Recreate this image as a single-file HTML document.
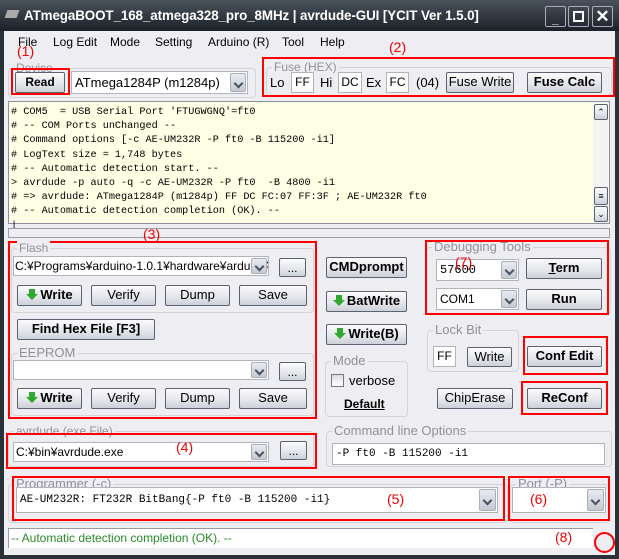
<!DOCTYPE html><html><head><meta charset="utf-8"><style>
*{box-sizing:border-box;margin:0;padding:0}
body{width:619px;height:559px;overflow:hidden;background:#2b3138;font-family:"Liberation Sans","Noto Sans CJK JP",sans-serif;font-size:12px;color:#000;position:relative}
.a{position:absolute}
.win{left:4px;top:31px;width:611px;height:524px;background:#eeeef2}
.btn{position:absolute;border:1px solid #5b6370;border-radius:2px;background:linear-gradient(#fbfbfd,#e3e5ea 60%,#ccd0d8);text-align:center;font-size:12px;line-height:18px;color:#000}
.b{font-weight:bold}
.grp{position:absolute;border:1px solid #d3d3d8;border-radius:4px}
.gl{position:absolute;top:-8px;left:5px;background:#eeeef2;color:#909098;padding:0 2px;font-size:12px;line-height:14px}
.red{position:absolute;border:2px solid #f00}
.rt{position:absolute;color:#e00;font-size:14px}
.cb{position:absolute;background:#fff;border:1px solid #b0b4bc;font-size:12px;line-height:18px;padding-left:3px;white-space:nowrap;overflow:hidden}
.dd{position:absolute;right:1px;top:1px;bottom:1px;width:16px;background:linear-gradient(#e8ebf0,#c5cad3);border:1px solid #a9aeb8;border-radius:2px;font-size:9px;color:#445;text-align:center}
.dd:after{content:"";position:absolute;left:4px;top:50%;margin-top:-3px;width:5px;height:5px;border-right:2px solid #4a5060;border-bottom:2px solid #4a5060;transform:rotate(45deg)}
.tb{position:absolute;background:#fff;border:1px solid #b0b4bc;text-align:center;line-height:19px}
.mono{font-family:"Liberation Mono",monospace}
.ar{display:inline-block;width:13px;height:12px;vertical-align:-2px;margin-right:1px;position:relative}
.ar:before{content:"";position:absolute;left:3px;top:0;width:6px;height:5px;background:#2ea82e}
.ar:after{content:"";position:absolute;left:0;top:5px;border-left:6px solid transparent;border-right:6px solid transparent;border-top:6px solid #2ea82e}
</style></head><body>
<div class="a" style="left:0;top:0;width:619px;height:31px;background:linear-gradient(#4a525c,#1c2128)"></div>
<div class="a" style="left:6px;top:10px;width:12px;height:8px;background:#aaa;transform:skew(-20deg)"></div>
<div class="a b" style="left:24px;top:8px;color:#fff;font-size:13.4px;letter-spacing:-0.1px">ATmegaBOOT_168_atmega328_pro_8MHz | avrdude-GUI [YCIT Ver 1.5.0]</div>
<div class="a" style="left:545px;top:6px;width:21px;height:21px;border:1px solid #aab;border-radius:2px;color:#fff;text-align:center;font-weight:bold;line-height:24px">_</div>
<div class="a" style="left:568px;top:6px;width:21px;height:21px;border:1px solid #aab;border-radius:2px"><div class="a" style="left:4px;top:4px;width:11px;height:11px;border:2px solid #fff"></div></div>
<div class="a" style="left:592px;top:6px;width:21px;height:21px;border:1px solid #aab;border-radius:2px;color:#fff;text-align:center;font-size:17px;line-height:19px;font-weight:bold">✕</div>
<div class="a win"></div>
<div class="a" style="top:35px;left:18px">File</div>
<div class="a" style="top:35px;left:53px">Log Edit</div>
<div class="a" style="top:35px;left:110px">Mode</div>
<div class="a" style="top:35px;left:155px">Setting</div>
<div class="a" style="top:35px;left:208px">Arduino (R)</div>
<div class="a" style="top:35px;left:282px">Tool</div>
<div class="a" style="top:35px;left:320px">Help</div>
<div class="rt" style="left:17px;top:43px">(1)</div>
<div class="rt" style="left:389px;top:39px">(2)</div>
<div class="grp" style="left:8px;top:68px;width:248px;height:30px"><div class="gl">Device</div></div>
<div class="red" style="left:11px;top:68px;width:59px;height:27px"></div>
<div class="btn b" style="left:15px;top:72px;width:50px;height:21px">Read</div>
<div class="cb" style="left:71px;top:71px;width:177px;height:23px;line-height:21px;font-size:13px">ATmega1284P (m1284p)<div class="dd"></div></div>
<div class="grp" style="left:266px;top:67px;width:346px;height:29px"><div class="gl">Fuse (HEX)</div></div>
<div class="red" style="left:262px;top:57px;width:353px;height:40px"></div>
<div class="a" style="left:270px;top:75px;font-size:13px">Lo</div>
<div class="tb" style="left:291px;top:72px;width:23px;height:21px">FF</div>
<div class="a" style="left:320px;top:75px;font-size:13px">Hi</div>
<div class="tb" style="left:338px;top:72px;width:24px;height:21px">DC</div>
<div class="a" style="left:366px;top:75px;font-size:13px">Ex</div>
<div class="tb" style="left:386px;top:72px;width:23px;height:21px">FC</div>
<div class="a" style="left:416px;top:75px;font-size:13px">(04)</div>
<div class="btn" style="left:446px;top:72px;width:68px;height:21px;font-size:13px">Fuse Write</div>
<div class="btn b" style="left:527px;top:72px;width:75px;height:21px;font-size:13px">Fuse Calc</div>
<div class="a mono" style="left:8px;top:101px;width:602px;height:123px;background:#ffffe6;border:1px solid #8a8f99;font-size:10.2px;line-height:14.2px;padding:4px 0 0 2px;white-space:pre"># COM5  = USB Serial Port 'FTUGWGNQ'=ft0
# -- COM Ports unChanged --
# Command options [-c AE-UM232R -P ft0 -B 115200 -i1]
# LogText size = 1,748 bytes
# -- Automatic detection start. --
&gt; avrdude -p auto -q -c AE-UM232R -P ft0  -B 4800 -i1
# =&gt; avrdude: ATmega1284P (m1284p) FF DC FC:07 FF:3F ; AE-UM232R ft0
# -- Automatic detection completion (OK). --
|</div>
<div class="a" style="left:593px;top:102px;width:16px;height:121px;background:#f4f4f4"></div>
<div class="btn" style="left:594px;top:104px;width:14px;height:16px;font-size:9px;line-height:14px">⌃</div>
<div class="btn" style="left:594px;top:187px;width:14px;height:18px;font-size:9px;line-height:16px">≡</div>
<div class="btn" style="left:594px;top:206px;width:14px;height:16px;font-size:9px;line-height:14px">⌄</div>
<div class="a" style="left:8px;top:228px;width:602px;height:10px;border:1px solid #9aa0aa;background:#eeeef2"></div>
<div class="rt" style="left:143px;top:226px">(3)</div>
<div class="red" style="left:8px;top:241px;width:309px;height:178px"></div>
<div class="grp" style="left:11px;top:248px;width:303px;height:65px"><div class="gl">Flash</div></div>
<div class="cb" style="left:13px;top:256px;width:256px;height:20px;padding-left:1px">C:¥Programs¥arduino-1.0.1¥hardware¥arduino¥<div class="dd"></div></div>
<div class="btn" style="left:279px;top:258px;width:27px;height:19px">...</div>
<div class="btn b" style="left:17px;top:285px;width:65px;height:21px;font-size:13px"><span class="ar"></span>Write</div>
<div class="btn" style="left:91px;top:285px;width:65px;height:21px;font-size:13px">Verify</div>
<div class="btn" style="left:165px;top:285px;width:65px;height:21px;font-size:13px">Dump</div>
<div class="btn" style="left:239px;top:285px;width:68px;height:21px;font-size:13px">Save</div>
<div class="btn b" style="left:17px;top:319px;width:138px;height:21px;font-size:13px">Find Hex File [F3]</div>
<div class="grp" style="left:11px;top:353px;width:303px;height:63px"><div class="gl" style="font-size:13px">EEPROM</div></div>
<div class="cb" style="left:13px;top:360px;width:256px;height:20px"><div class="dd"></div></div>
<div class="btn" style="left:279px;top:362px;width:27px;height:19px">...</div>
<div class="btn b" style="left:17px;top:388px;width:65px;height:21px;font-size:13px"><span class="ar"></span>Write</div>
<div class="btn" style="left:91px;top:388px;width:65px;height:21px;font-size:13px">Verify</div>
<div class="btn" style="left:165px;top:388px;width:65px;height:21px;font-size:13px">Dump</div>
<div class="btn" style="left:239px;top:388px;width:68px;height:21px;font-size:13px">Save</div>
<div class="btn b" style="left:326px;top:257px;width:81px;height:21px;font-size:13px">CMDprompt</div>
<div class="btn b" style="left:326px;top:291px;width:81px;height:21px;font-size:13px"><span class="ar"></span>BatWrite</div>
<div class="btn b" style="left:326px;top:324px;width:81px;height:21px;font-size:13px"><span class="ar"></span>Write(B)</div>
<div class="grp" style="left:325px;top:361px;width:83px;height:56px"><div class="gl" style="font-size:13px">Mode</div></div>
<div class="a" style="left:331px;top:374px;width:13px;height:13px;border:1px solid #778;background:linear-gradient(#ddd,#fff)"></div>
<div class="a" style="left:349px;top:373px;font-size:13px">verbose</div>
<div class="a b" style="left:344px;top:397px;text-decoration:underline">Default</div>
<div class="grp" style="left:426px;top:247px;width:185px;height:67px"><div class="gl" style="font-size:13px">Debugging Tools</div></div>
<div class="red" style="left:425px;top:240px;width:184px;height:75px"></div>
<div class="cb mono" style="left:436px;top:259px;width:83px;height:22px;line-height:20px">57600<div class="dd"></div></div>
<div class="rt" style="left:455px;top:254px">(7)</div>
<div class="cb" style="left:436px;top:288px;width:83px;height:22px;line-height:20px">COM1<div class="dd"></div></div>
<div class="btn b" style="left:526px;top:258px;width:76px;height:21px;font-size:13px"><u>T</u>erm</div>
<div class="btn b" style="left:526px;top:289px;width:76px;height:21px;font-size:13px">Run</div>
<div class="grp" style="left:427px;top:330px;width:92px;height:42px"><div class="gl" style="font-size:13px">Lock Bit</div></div>
<div class="tb" style="left:433px;top:346px;width:23px;height:21px">FF</div>
<div class="btn" style="left:467px;top:347px;width:45px;height:20px;font-size:13px">Write</div>
<div class="red" style="left:523px;top:336px;width:85px;height:39px"></div>
<div class="btn b" style="left:527px;top:346px;width:75px;height:21px;font-size:13px">Conf Edit</div>
<div class="btn" style="left:437px;top:388px;width:76px;height:21px;font-size:13px">ChipErase</div>
<div class="red" style="left:521px;top:381px;width:87px;height:34px"></div>
<div class="btn b" style="left:527px;top:388px;width:75px;height:21px;font-size:13px">ReConf</div>
<div class="grp" style="left:8px;top:431px;width:306px;height:36px"><div class="gl">avrdude (exe File)</div></div>
<div class="red" style="left:6px;top:433px;width:311px;height:36px"></div>
<div class="cb" style="left:13px;top:442px;width:256px;height:20px;padding-left:2px">C:¥bin¥avrdude.exe<div class="dd"></div></div>
<div class="rt" style="left:176px;top:439px">(4)</div>
<div class="btn" style="left:280px;top:441px;width:27px;height:19px">...</div>
<div class="grp" style="left:326px;top:431px;width:286px;height:36px"><div class="gl" style="font-size:13px">Command line Options</div></div>
<div class="tb mono" style="left:332px;top:443px;width:273px;height:22px;text-align:left;padding-left:3px;font-size:11px;line-height:20px">-P ft0 -B 115200 -i1</div>
<div class="grp" style="left:8px;top:484px;width:500px;height:39px"><div class="gl" style="font-size:13px">Programmer (-c)</div></div>
<div class="red" style="left:12px;top:476px;width:493px;height:45px"></div>
<div class="cb mono" style="left:16px;top:487px;width:482px;height:26px;line-height:24px;font-size:11px">AE-UM232R: FT232R BitBang{-P ft0 -B 115200 -i1}<div class="dd" style="width:17px"></div></div>
<div class="rt" style="left:387px;top:491px">(5)</div>
<div class="grp" style="left:510px;top:484px;width:100px;height:39px"><div class="gl" style="font-size:13px">Port (-P)</div></div>
<div class="red" style="left:508px;top:476px;width:102px;height:45px"></div>
<div class="cb" style="left:512px;top:487px;width:94px;height:26px"><div class="dd" style="width:17px"></div></div>
<div class="rt" style="left:530px;top:491px">(6)</div>
<div class="a" style="left:8px;top:528px;width:585px;height:20px;background:#fff;border-top:1px solid #99a;border-left:1px solid #99a;color:#2a8a2a;padding-left:2px;line-height:19px;font-size:12px">-- Automatic detection completion (OK). --</div>
<div class="rt" style="left:555px;top:529px">(8)</div>
<div class="a" style="left:594px;top:532px;width:21px;height:21px;border:2px solid #f00;border-radius:50%"></div>
</body></html>
